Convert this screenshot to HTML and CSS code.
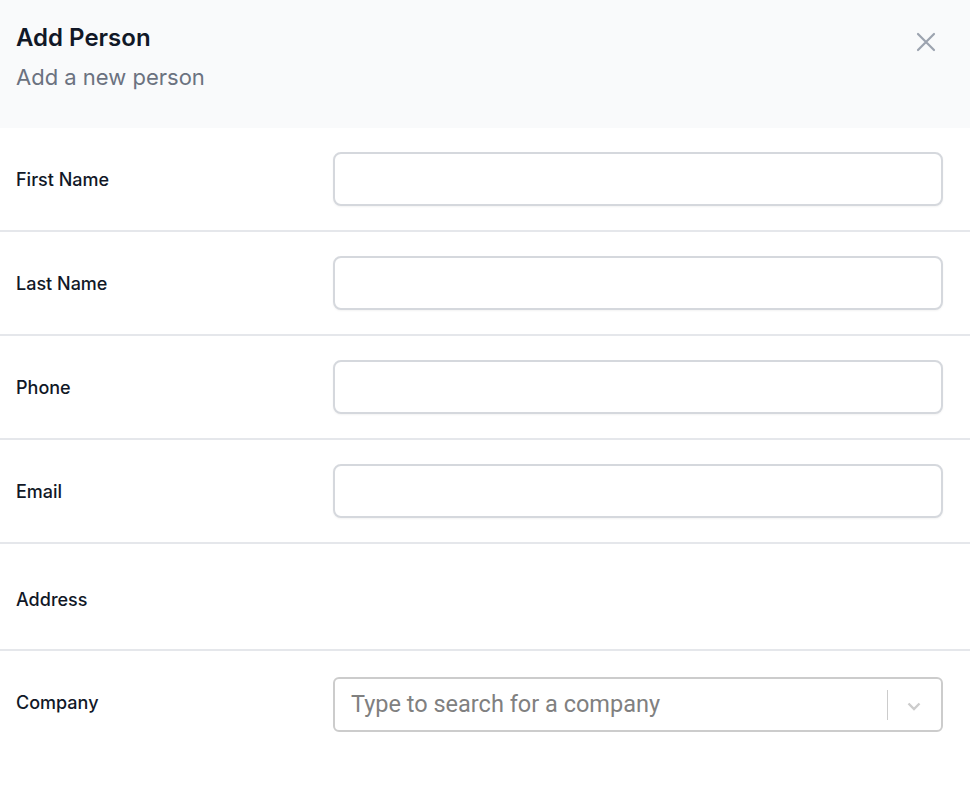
FILE: index.html
```html
<!DOCTYPE html>
<html lang="en">
<head>
<meta charset="utf-8">
<title>Add Person</title>
<link rel="stylesheet" href="styles.css">
</head>
<body>
<div class="panel">
  <header class="panel-header">
    <div class="header-text">
      <h2 class="title">Add Person</h2>
      <p class="subtitle">Add a new person</p>
    </div>
    <button class="close-btn" type="button" aria-label="Close">
      <svg width="20" height="20" viewBox="0 0 20 20" fill="none" stroke="#9ca3af" stroke-width="2.2" stroke-linecap="round"><path d="M2 2L18 18M18 2L2 18"/></svg>
    </button>
  </header>
  <div class="form">
    <div class="row">
      <label class="label">First Name</label>
      <input class="input" type="text">
    </div>
    <div class="row">
      <label class="label">Last Name</label>
      <input class="input" type="text">
    </div>
    <div class="row">
      <label class="label">Phone</label>
      <input class="input" type="text">
    </div>
    <div class="row">
      <label class="label">Email</label>
      <input class="input" type="text">
    </div>
    <div class="row row-address">
      <label class="label">Address</label>
    </div>
    <div class="row row-company">
      <label class="label label-company">Company</label>
      <div class="select">
        <span class="placeholder">Type to search for a company</span>
        <span class="sep"></span>
        <svg class="chev" width="20" height="20" viewBox="0 0 20 20"><path d="M4.5 7.5L10 13L15.5 7.5" fill="none" stroke="#cccccc" stroke-width="2.4"/></svg>
      </div>
    </div>
  </div>
</div>
</body>
</html>
```
FILE: styles.css
```css
* { box-sizing: border-box; }
html, body { margin: 0; padding: 0; background: #ffffff; }
body { font-family: Inter, "Noto Sans", sans-serif; color: #111827; }

.panel { width: 970px; }

.panel-header {
  background: #f9fafb;
  height: 128px;
  padding: 22px 34px 0 16px;
  display: flex;
  justify-content: space-between;
  align-items: flex-start;
}
.title {
  margin: 0;
  font-size: 24px;
  font-weight: 600;
  line-height: 32px;
  color: #111827;
}
.subtitle {
  margin: 8px 0 0;
  font-size: 22px;
  line-height: 30px;
  color: #6b7280;
}
.close-btn {
  margin-top: 10px;
  background: none;
  border: 0;
  padding: 0;
  width: 20px;
  height: 20px;
  cursor: pointer;
}
.close-btn svg { display: block; }

.row {
  display: grid;
  grid-template-columns: repeat(3, 1fr);
  column-gap: 24px;
  align-items: center;
  padding: 24px 27px 24px 16px;
  border-bottom: 2px solid #e5e7eb;
}
.label {
  font-size: 18px;
  font-weight: 500;
  color: #111827;
}
.input {
  grid-column: span 2;
  height: 54px;
  border: 2px solid #d5d8dd;
  border-radius: 8px;
  background: #fff;
  box-shadow: 0 1px 2px rgba(0,0,0,0.05);
  font: inherit;
}
.row-address { height: 107px; padding-top: 30px; padding-bottom: 24px; }
.row-company { border-bottom: 0; padding-top: 26px; }
.label-company { margin-top: -5px; }

.select {
  grid-column: span 2;
  height: 55px;
  border: 2px solid #cccccc;
  border-radius: 6px;
  display: flex;
  align-items: center;
  padding-left: 16px;
}
.placeholder {
  flex: 1;
  font-family: Roboto, "Liberation Sans", sans-serif;
  font-size: 23.5px;
  color: #808080;
  margin-top: -2px;
}
.sep {
  width: 1.5px;
  height: 30px;
  background: #cccccc;
}
.chev { margin: 2px 17px 0 16px; display: block; }
```
